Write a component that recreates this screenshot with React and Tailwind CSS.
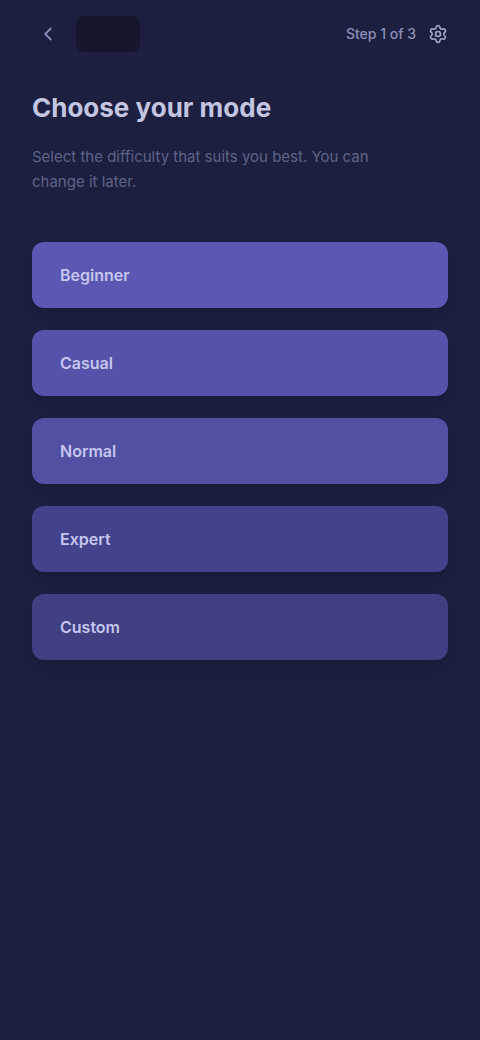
import { ChevronLeft, Settings } from "lucide-react";

const modes = [
  { name: "Beginner", bg: "bg-[#5a58b2]" },
  { name: "Casual", bg: "bg-[#5553a9]" },
  { name: "Normal", bg: "bg-[#5150a3]" },
  { name: "Expert", bg: "bg-[#43428c]" },
  { name: "Custom", bg: "bg-[#403f82]" },
];

export default function App() {
  return (
    <div
      className="min-h-[1040px] w-[480px] bg-[#1c1f40] text-white"
      style={{ fontFamily: "Inter, 'Noto Sans', sans-serif" }}
    >
      <header className="flex items-center justify-between px-8 pt-4 pb-2">
        <div className="flex items-center gap-3">
          <button className="flex h-8 w-8 items-center justify-center rounded-full text-[#8a8cb8]">
            <ChevronLeft size={22} />
          </button>
          <div className="h-9 w-16 rounded-lg bg-[#15152c]" />
        </div>
        <div className="flex items-center gap-3 text-[#8f90b8]">
          <span className="text-sm font-medium">Step 1 of 3</span>
          <Settings size={20} className="text-[#a2a3c8]" />
        </div>
      </header>

      <section className="px-8 pt-8">
        <h1 className="text-[26px] font-bold leading-8 text-[#c4c5e0]">
          Choose your mode
        </h1>
        <p className="mt-5 max-w-[370px] text-[15px] leading-[25px] text-[#5f6388]">
          Select the difficulty that suits you best. You can change it later.
        </p>
      </section>

      <div className="mt-12 flex flex-col gap-[22px] px-8">
        {modes.map((m) => (
          <button
            key={m.name}
            className={`flex h-[66px] items-center rounded-xl px-7 text-left text-base font-semibold text-[#c6c6ee] shadow-lg ${m.bg}`}
          >
            {m.name}
          </button>
        ))}
      </div>
    </div>
  );
}
